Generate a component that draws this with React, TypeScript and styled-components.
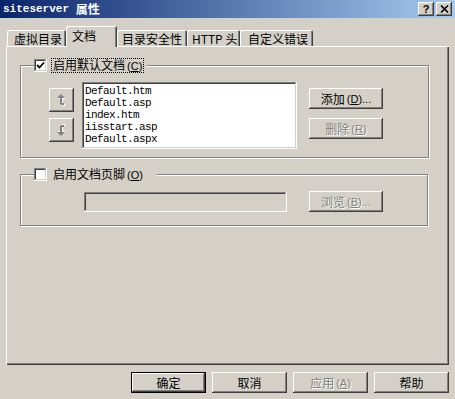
import React from "react";
import styled, { createGlobalStyle, css } from "styled-components";

const GlobalStyle = createGlobalStyle`
  html, body {
    margin: 0;
    padding: 0;
    background: #d4d0c8;
  }
  body {
    font-family: "Noto Sans CJK SC", "Liberation Sans", sans-serif;
    font-size: 12px;
    color: #000;
  }
`;

const raised = css`
  box-shadow: inset -1px -1px #404040, inset 1px 1px #ffffff,
    inset -2px -2px #808080, inset 2px 2px #d4d0c8;
`;

const sunken = css`
  box-shadow: inset -1px -1px #ffffff, inset 1px 1px #808080,
    inset -2px -2px #d4d0c8, inset 2px 2px #404040;
`;

const Window = styled.div`
  width: 455px;
  height: 399px;
  display: flex;
  flex-direction: column;
  background: #d4d0c8;
  overflow: hidden;
`;

const TitleBar = styled.div`
  height: 18px;
  display: flex;
  align-items: center;
  padding: 0 3px;
  background: linear-gradient(to right, #0a246a, #a6caf0);
  color: #fff;
`;

const TitleText = styled.span`
  font-family: "Liberation Mono", monospace;
  font-weight: bold;
  font-size: 11px;
  line-height: 14px;
`;

const TitleCjk = styled.span`
  font-family: "Noto Sans CJK SC", sans-serif;
  font-weight: bold;
  font-size: 12px;
  line-height: 14px;
`;

const CaptionButtons = styled.div`
  margin-left: auto;
  display: flex;
  gap: 2px;
`;

const CaptionButton = styled.div`
  width: 16px;
  height: 14px;
  background: #d4d0c8;
  ${raised};
  display: flex;
  align-items: center;
  justify-content: center;
  color: #000;
  font-family: "Liberation Sans", sans-serif;
  font-weight: bold;
  font-size: 11px;
  line-height: 14px;
`;

const Body = styled.div`
  padding: 8px 6px 0 6px;
  display: flex;
  flex-direction: column;
`;

const TabStrip = styled.div`
  display: flex;
  align-items: flex-end;
  height: 20px;
  padding-left: 1px;
`;

const Tab = styled.div<{ $active?: boolean; $width: number; $pad: number }>`
  width: ${(p) => p.$width}px;
  height: ${(p) => (p.$active ? 21 : 16)}px;
  margin-bottom: ${(p) => (p.$active ? -1 : 0)}px;
  position: relative;
  z-index: ${(p) => (p.$active ? 1 : 0)};
  box-sizing: border-box;
  padding-left: ${(p) => p.$pad}px;
  padding-top: ${(p) => (p.$active ? 3 : 2)}px;
  background: #d4d0c8;
  border-radius: 2px 2px 0 0;
  box-shadow: inset 1px 1px #ffffff, inset -1px 0 #404040,
    inset -2px 0 #808080;
  font-size: 12px;
  line-height: 13px;
  white-space: nowrap;
`;

const Panel = styled.div`
  height: 319px;
  box-sizing: border-box;
  padding: 12px 0 0 14px;
  display: flex;
  flex-direction: column;
  align-items: flex-start;
  box-shadow: inset 1px 1px #ffffff, inset -1px -1px #404040,
    inset -2px -2px #808080;
`;

const GroupBox = styled.fieldset<{ $width: number; $height: number; $top?: number }>`
  margin: ${(p) => p.$top ?? 0}px 0 0 0;
  padding: 0;
  min-width: 0;
  width: ${(p) => p.$width}px;
  height: ${(p) => p.$height}px;
  box-sizing: border-box;
  border: 1px solid #808080;
  box-shadow: inset 1px 1px #ffffff, 1px 1px #ffffff;
`;

const Legend = styled.legend<{ $padRight: number }>`
  margin-left: 13px;
  padding: 0 ${(p) => p.$padRight}px 0 0;
  height: 14px;
  display: flex;
  align-items: center;
  background: #d4d0c8;
`;

const CheckBox = styled.div`
  width: 13px;
  height: 13px;
  box-sizing: border-box;
  background: #fff;
  ${sunken};
  display: flex;
  align-items: center;
  justify-content: center;
`;

const CheckLabel = styled.span<{ $focused?: boolean }>`
  margin-left: ${(p) => (p.$focused ? 4 : 6)}px;
  padding: 0 ${(p) => (p.$focused ? 1 : 0)}px;
  line-height: 12px;
  border: ${(p) => (p.$focused ? "1px dotted #000" : "none")};
  white-space: nowrap;
`;

const Mnemonic = styled.span`
  margin-left: 2px;
  font-family: "Liberation Sans", sans-serif;
  font-size: 11px;
`;

const GroupRow = styled.div<{ $padLeft: number; $align?: string }>`
  display: flex;
  align-items: ${(p) => p.$align ?? "flex-start"};
  padding: 10px 0 0 ${(p) => p.$padLeft}px;
`;

const ArrowColumn = styled.div`
  display: flex;
  flex-direction: column;
  gap: 6px;
  margin-top: 6px;
`;

const ArrowButton = styled.div`
  width: 25px;
  height: 24px;
  background: #d4d0c8;
  ${raised};
  display: flex;
  align-items: center;
  justify-content: center;
`;

const ListBox = styled.div`
  margin-left: 8px;
  width: 215px;
  height: 67px;
  box-sizing: border-box;
  background: #fff;
  ${sunken};
  padding: 3px 3px 0 3px;
  font-family: "Liberation Mono", monospace;
  font-size: 11px;
  letter-spacing: -0.6px;
`;

const ListItem = styled.div`
  height: 12px;
  line-height: 12px;
  white-space: nowrap;
`;

const ButtonColumn = styled.div`
  display: flex;
  flex-direction: column;
  gap: 9px;
  margin: 6px 0 0 12px;
`;

const Button = styled.div<{
  $width: number;
  $disabled?: boolean;
  $default?: boolean;
  $ml?: number;
}>`
  width: ${(p) => p.$width}px;
  height: 21px;
  margin-left: ${(p) => p.$ml ?? 0}px;
  box-sizing: border-box;
  background: #d4d0c8;
  display: flex;
  align-items: center;
  justify-content: center;
  font-size: 12px;
  line-height: 14px;
  white-space: nowrap;
  color: ${(p) => (p.$disabled ? "#808080" : "#000")};
  text-shadow: ${(p) => (p.$disabled ? "1px 1px #ffffff" : "none")};
  ${(p) =>
    p.$default
      ? css`
          box-shadow: inset 0 0 0 1px #000, inset -2px -2px #404040,
            inset 2px 2px #ffffff, inset -3px -3px #808080;
        `
      : raised};
`;

const TextField = styled.div`
  width: 203px;
  height: 20px;
  box-sizing: border-box;
  background: #d4d0c8;
  ${sunken};
`;

const Footer = styled.div`
  display: flex;
  justify-content: flex-end;
  gap: 6px;
  margin-top: 7px;
`;

const ArrowIcon: React.FC<{ down?: boolean }> = ({ down }) => {
  const shape = (
    <>
      <polygon points="5,0 1,4 9,4" />
      <rect x="4" y="4" width="2" height="6" />
      <rect x="5" y="9" width="3" height="2" />
    </>
  );
  return (
    <svg width="11" height="13" viewBox="0 0 11 13">
      <g transform={down ? "translate(0,12) scale(1,-1)" : undefined}>
        <g fill="#ffffff" transform="translate(1,1)">
          {shape}
        </g>
        <g fill="#808080">{shape}</g>
      </g>
    </svg>
  );
};

const CheckMark = () => (
  <svg width="9" height="9" viewBox="0 0 9 9">
    <path d="M1 4 L3.5 6.5 L8 1.5" stroke="#000" strokeWidth="1.8" fill="none" />
  </svg>
);

const CloseGlyph = () => (
  <svg width="9" height="8" viewBox="0 0 9 8">
    <path d="M1 0.5 L8 7.5 M8 0.5 L1 7.5" stroke="#000" strokeWidth="1.6" />
  </svg>
);

const files = [
  "Default.htm",
  "Default.asp",
  "index.htm",
  "iisstart.asp",
  "Default.aspx",
];

const tabs = [
  { label: "虚拟目录", width: 59, pad: 7 },
  { label: "文档", width: 51, pad: 6, active: true },
  { label: "目录安全性", width: 70, pad: 5 },
  { label: "HTTP 头", width: 53, pad: 5 },
  { label: "自定义错误", width: 73, pad: 8 },
];

export default function App() {
  return (
    <Window>
      <GlobalStyle />
      <TitleBar>
        <TitleText>siteserver&nbsp;</TitleText>
        <TitleCjk>属性</TitleCjk>
        <CaptionButtons>
          <CaptionButton>?</CaptionButton>
          <CaptionButton>
            <CloseGlyph />
          </CaptionButton>
        </CaptionButtons>
      </TitleBar>
      <Body>
        <TabStrip>
          {tabs.map((t) => (
            <Tab key={t.label} $active={t.active} $width={t.width} $pad={t.pad}>
              {t.label}
            </Tab>
          ))}
        </TabStrip>
        <Panel>
          <GroupBox $width={409} $height={100}>
            <Legend $padRight={3}>
              <CheckBox>
                <CheckMark />
              </CheckBox>
              <CheckLabel $focused>
                启用默认文档<Mnemonic>(<u>C</u>)</Mnemonic>
              </CheckLabel>
            </Legend>
            <GroupRow $padLeft={28}>
              <ArrowColumn>
                <ArrowButton>
                  <ArrowIcon />
                </ArrowButton>
                <ArrowButton>
                  <ArrowIcon down />
                </ArrowButton>
              </ArrowColumn>
              <ListBox>
                {files.map((f) => (
                  <ListItem key={f}>{f}</ListItem>
                ))}
              </ListBox>
              <ButtonColumn>
                <Button $width={74}>
                  添加<Mnemonic>(<u>D</u>)...</Mnemonic>
                </Button>
                <Button $width={74} $disabled>
                  删除<Mnemonic>(<u>R</u>)</Mnemonic>
                </Button>
              </ButtonColumn>
            </GroupRow>
          </GroupBox>
          <GroupBox $width={408} $height={59} $top={9}>
            <Legend $padRight={14}>
              <CheckBox />
              <CheckLabel>
                启用文档页脚<Mnemonic>(<u>O</u>)</Mnemonic>
              </CheckLabel>
            </Legend>
            <GroupRow $padLeft={63} $align="center">
              <TextField />
              <Button $width={74} $disabled $ml={22}>
                浏览<Mnemonic>(<u>B</u>)...</Mnemonic>
              </Button>
            </GroupRow>
          </GroupBox>
        </Panel>
        <Footer>
          <Button $width={75} $default>
            确定
          </Button>
          <Button $width={75}>取消</Button>
          <Button $width={75} $disabled>
            应用<Mnemonic>(<u>A</u>)</Mnemonic>
          </Button>
          <Button $width={75}>帮助</Button>
        </Footer>
      </Body>
    </Window>
  );
}
